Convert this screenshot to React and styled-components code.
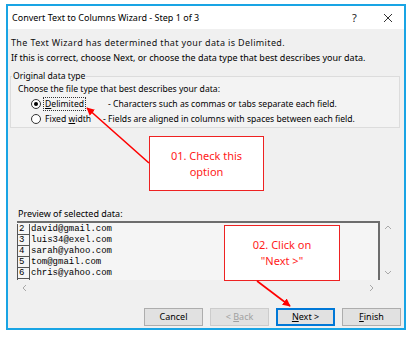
import React from 'react';
import styled, { createGlobalStyle } from 'styled-components';

const GlobalStyle = createGlobalStyle`
  html, body { margin: 0; padding: 0; background: #ffffff; }
  body { font-family: "Noto Sans", "Liberation Sans", sans-serif; }
  * { box-sizing: border-box; }
`;

const Page = styled.div`
  width: 414px;
  height: 337px;
  padding: 4px 0 0 6px;
  background: #ffffff;
`;

const Dialog = styled.div`
  position: relative;
  width: 400px;
  height: 326px;
  border: 2px solid #19a4e4;
  background: #f0f0f0;
  display: flex;
  flex-direction: column;
  font-family: "Noto Sans", "Liberation Sans", sans-serif;
  font-size: 9px;
  color: #000;
`;

const TitleBar = styled.div`
  height: 23px;
  flex: none;
  background: #ffffff;
  display: flex;
  align-items: center;
  padding-left: 4px;
`;

const Title = styled.div`
  flex: 1;
  font-size: 9px;
  white-space: nowrap;
`;

const TitleButton = styled.div`
  width: 33px;
  height: 23px;
  display: flex;
  align-items: center;
  justify-content: center;
  font-size: 11px;
  color: #222;
`;

const Body = styled.div`
  flex: 1;
  display: flex;
  flex-direction: column;
  padding: 6px 3px 2px 2px;
`;

const Para = styled.p`
  margin: 0 0 0 1px;
  line-height: 15px;
  white-space: nowrap;
  letter-spacing: ${p => (p.$wide ? '0.36px' : '0')};
  color: ${p => (p.$wide ? '#111' : '#000')};
`;

const GroupBox = styled.fieldset`
  margin: 5px 1px 0 0;
  padding: 0 0 1px 7px;
  border: 1px solid #dcdcdc;
  background: #f3f3f3;
  min-width: 0;
  font-size: 8.6px;
`;

const Legend = styled.legend`
  padding: 0 1px;
  margin-left: -6px;
  line-height: 12px;
`;

const GroupText = styled.div`
  line-height: 14px;
  white-space: nowrap;
`;

const OptionRow = styled.div`
  display: flex;
  align-items: center;
  height: 15px;
  padding-left: 13px;
  white-space: nowrap;
`;

const Radio = styled.span`
  width: 10px;
  height: 10px;
  border-radius: 50%;
  border: 1px solid #333;
  background: #fff;
  display: flex;
  align-items: center;
  justify-content: center;
  margin-right: 2px;
  &::after {
    content: "";
    width: 4px;
    height: 4px;
    border-radius: 50%;
    background: ${p => (p.$checked ? '#000' : 'transparent')};
  }
`;

const OptionLabel = styled.span`
  padding: 0 1px;
  line-height: 12px;
  border: 1px dotted ${p => (p.$focused ? '#333' : 'transparent')};
`;

const OptionDesc = styled.span`
  margin-left: ${p => p.$gap}px;
`;

const Key = styled.u`
  text-decoration: underline;
  text-underline-offset: 1px;
`;

const PreviewLabel = styled.div`
  margin: 78px 0 0 8px;
  line-height: 15px;
`;

const Preview = styled.div`
  margin-left: 7px;
  width: 378px;
  display: flex;
  flex-direction: column;
`;

const PreviewMain = styled.div`
  display: flex;
  height: 59px;
`;

const PreviewContent = styled.div`
  width: 363px;
  border-top: 2px solid #6d6d6d;
  border-right: 2px solid #6d6d6d;
  background: #f5f5f5;
  overflow: hidden;
  padding-top: 0.5px;
`;

const DataRow = styled.div`
  display: flex;
  height: 11px;
  font-family: "Liberation Mono", "DejaVu Sans Mono", monospace;
  font-size: 9px;
  line-height: 11px;
  white-space: nowrap;
`;

const LineNo = styled.span`
  width: 13px;
  flex: none;
  border-left: 1.5px solid #555;
  border-right: 1px solid #555;
  border-bottom: 1px solid #555;
  padding-left: 1px;
  margin-right: 1px;
  line-height: 10px;
`;

const VScroll = styled.div`
  width: 15px;
  display: flex;
  flex-direction: column;
  justify-content: space-between;
  align-items: center;
  padding: 3px 0 3px;
`;

const HScroll = styled.div`
  height: 15px;
  width: 363px;
  display: flex;
  justify-content: space-between;
  align-items: center;
  padding: 0 4px 0 4px;
`;

const ButtonRow = styled.div`
  margin-top: 13px;
  display: flex;
  justify-content: flex-end;
  gap: 7px;
`;

const Button = styled.button`
  width: 59px;
  height: 18px;
  padding: 0;
  font-family: "Noto Sans", "Liberation Sans", sans-serif;
  font-size: 9px;
  line-height: 14px;
  background: #e1e1e1;
  color: ${p => (p.$disabled ? '#a0a0a0' : '#000')};
  border: 1px solid ${p => (p.$default ? '#0078d7' : p.$disabled ? '#cccccc' : '#adadad')};
  box-shadow: ${p => (p.$default ? 'inset 0 0 0 1px #0078d7' : 'none')};
`;

const Callout = styled.div`
  position: absolute;
  background: #ffffff;
  border: 1px solid #ee2222;
  color: #ff1a1a;
  font-size: 11px;
  line-height: 16px;
  display: flex;
  align-items: center;
  justify-content: center;
  text-align: center;
`;

const Overlay = styled.svg`
  position: absolute;
  left: 0;
  top: 0;
  width: 396px;
  height: 322px;
  pointer-events: none;
`;

const Chevron = ({ dir }) => {
  const paths = {
    up: 'M1 5 L4 2 L7 5',
    down: 'M1 2 L4 5 L7 2',
    left: 'M5 1 L2 4 L5 7',
    right: 'M2 1 L5 4 L2 7',
  };
  return (
    <svg width="8" height="8" viewBox="0 0 8 8">
      <path d={paths[dir]} fill="none" stroke="#a8a8a8" strokeWidth="1" />
    </svg>
  );
};

const rows = [
  ['2', 'david@gmail.com'],
  ['3', 'luis34@exel.com'],
  ['4', 'sarah@yahoo.com'],
  ['5', 'tom@gmail.com'],
  ['6', 'chris@yahoo.com'],
  ['', ''],
];

export default function App() {
  return (
    <>
      <GlobalStyle />
      <Page>
        <Dialog>
          <TitleBar>
            <Title>Convert Text to Columns Wizard - Step 1 of 3</Title>
            <TitleButton>?</TitleButton>
            <TitleButton>
              <svg width="10" height="10" viewBox="0 0 10 10">
                <path d="M1 1 L9 9 M9 1 L1 9" stroke="#333" strokeWidth="1" />
              </svg>
            </TitleButton>
          </TitleBar>
          <Body>
            <Para $wide>The Text Wizard has determined that your data is Delimited.</Para>
            <Para>If this is correct, choose Next, or choose the data type that best describes your data.</Para>
            <GroupBox>
              <Legend>Original data type</Legend>
              <GroupText>Choose the file type that best describes your data:</GroupText>
              <OptionRow>
                <Radio $checked />
                <OptionLabel $focused>
                  <Key>D</Key>elimited
                </OptionLabel>
                <OptionDesc $gap={22}>- Characters such as commas or tabs separate each field.</OptionDesc>
              </OptionRow>
              <OptionRow>
                <Radio />
                <OptionLabel>
                  Fixed <Key>w</Key>idth
                </OptionLabel>
                <OptionDesc $gap={10}>- Fields are aligned in columns with spaces between each field.</OptionDesc>
              </OptionRow>
            </GroupBox>
            <PreviewLabel>Preview of selected data:</PreviewLabel>
            <Preview>
              <PreviewMain>
                <PreviewContent>
                  {rows.map(([n, t], i) => (
                    <DataRow key={i}>
                      <LineNo>{n}</LineNo>
                      <span>{t}</span>
                    </DataRow>
                  ))}
                </PreviewContent>
                <VScroll>
                  <Chevron dir="up" />
                  <Chevron dir="down" />
                </VScroll>
              </PreviewMain>
              <HScroll>
                <Chevron dir="left" />
                <Chevron dir="right" />
              </HScroll>
            </Preview>
            <ButtonRow>
              <Button>Cancel</Button>
              <Button $disabled>
                &lt; <Key>B</Key>ack
              </Button>
              <Button $default>
                <Key>N</Key>ext &gt;
              </Button>
              <Button>
                <Key>F</Key>inish
              </Button>
            </ButtonRow>
          </Body>
          <Callout style={{ left: 141, top: 130, width: 115, height: 55 }}>
            01. Check this
            <br />
            option
          </Callout>
          <Callout style={{ left: 216, top: 219, width: 116, height: 56 }}>
            02. Click on
            <br />
            "Next &gt;"
          </Callout>
          <Overlay viewBox="0 0 396 322">
            <defs>
              <marker id="ah" viewBox="0 0 10 10" refX="9" refY="5" markerWidth="5" markerHeight="5" orient="auto">
                <path d="M0 0 L10 5 L0 10 Z" fill="#ff0000" />
              </marker>
            </defs>
            <line x1="141" y1="157" x2="79" y2="102" stroke="#ff0000" strokeWidth="1.6" markerEnd="url(#ah)" />
            <line x1="249" y1="275" x2="282" y2="300" stroke="#ff0000" strokeWidth="1.6" markerEnd="url(#ah)" />
          </Overlay>
        </Dialog>
      </Page>
    </>
  );
}
